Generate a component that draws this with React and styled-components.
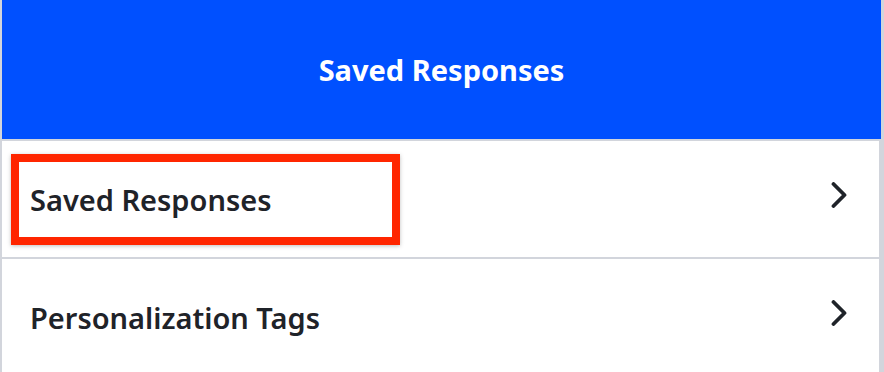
import React from 'react';
import styled, { createGlobalStyle } from 'styled-components';

const GlobalStyle = createGlobalStyle`
  html, body {
    margin: 0;
    padding: 0;
    background: #ffffff;
  }
  body {
    font-family: "Noto Sans", "Open Sans", sans-serif;
    -webkit-font-smoothing: antialiased;
  }
`;

const Panel = styled.div`
  width: 884px;
  height: 372px;
  overflow: hidden;
  display: flex;
  flex-direction: column;
  padding-left: 2px;
  box-sizing: border-box;
  background: #d2d5dc;
`;

const Header = styled.header`
  height: 139px;
  margin-right: 3px;
  background: #0050ff;
  color: #ffffff;
  display: flex;
  align-items: center;
  justify-content: center;
  font-size: 29px;
  font-weight: 700;
  border-bottom: 2px solid #d2d5dc;
  flex-shrink: 0;
`;

const List = styled.ul`
  list-style: none;
  margin: 0 5px 0 0;
  padding: 0;
  display: flex;
  flex-direction: column;
  gap: 2px;
  background: #d2d5dc;
`;

const Row = styled.li`
  height: 116px;
  background: #ffffff;
  display: flex;
  align-items: center;
  justify-content: space-between;
  padding: 0 31px 0 9px;
  flex-shrink: 0;
`;

const Label = styled.span`
  display: flex;
  align-items: center;
  box-sizing: border-box;
  width: 389px;
  height: 91px;
  padding-left: 11px;
  margin-top: 1px;
  font-size: 29px;
  font-weight: 600;
  color: #1f2329;
  white-space: nowrap;
  border: 8px solid ${({ $highlighted }) => ($highlighted ? '#ff2600' : 'transparent')};
  box-shadow: ${({ $highlighted }) => ($highlighted ? '0 1px 4px rgba(0, 0, 0, 0.25)' : 'none')};
`;

const ChevronIcon = styled.svg`
  flex-shrink: 0;
  margin-bottom: 9px;
`;

const Chevron = () => (
  <ChevronIcon width="17" height="26" viewBox="0 0 17 26" fill="none">
    <path
      d="M2.5 2 L13.5 13 L2.5 24"
      stroke="#1f2329"
      strokeWidth="3.8"
      strokeLinecap="round"
      strokeLinejoin="round"
    />
  </ChevronIcon>
);

const items = [
  { title: 'Saved Responses', highlighted: true },
  { title: 'Personalization Tags', highlighted: false },
];

const App = () => (
  <>
    <GlobalStyle />
    <Panel>
      <Header>Saved Responses</Header>
      <List>
        {items.map((item) => (
          <Row key={item.title}>
            <Label $highlighted={item.highlighted}>{item.title}</Label>
            <Chevron />
          </Row>
        ))}
      </List>
    </Panel>
  </>
);

export default App;
